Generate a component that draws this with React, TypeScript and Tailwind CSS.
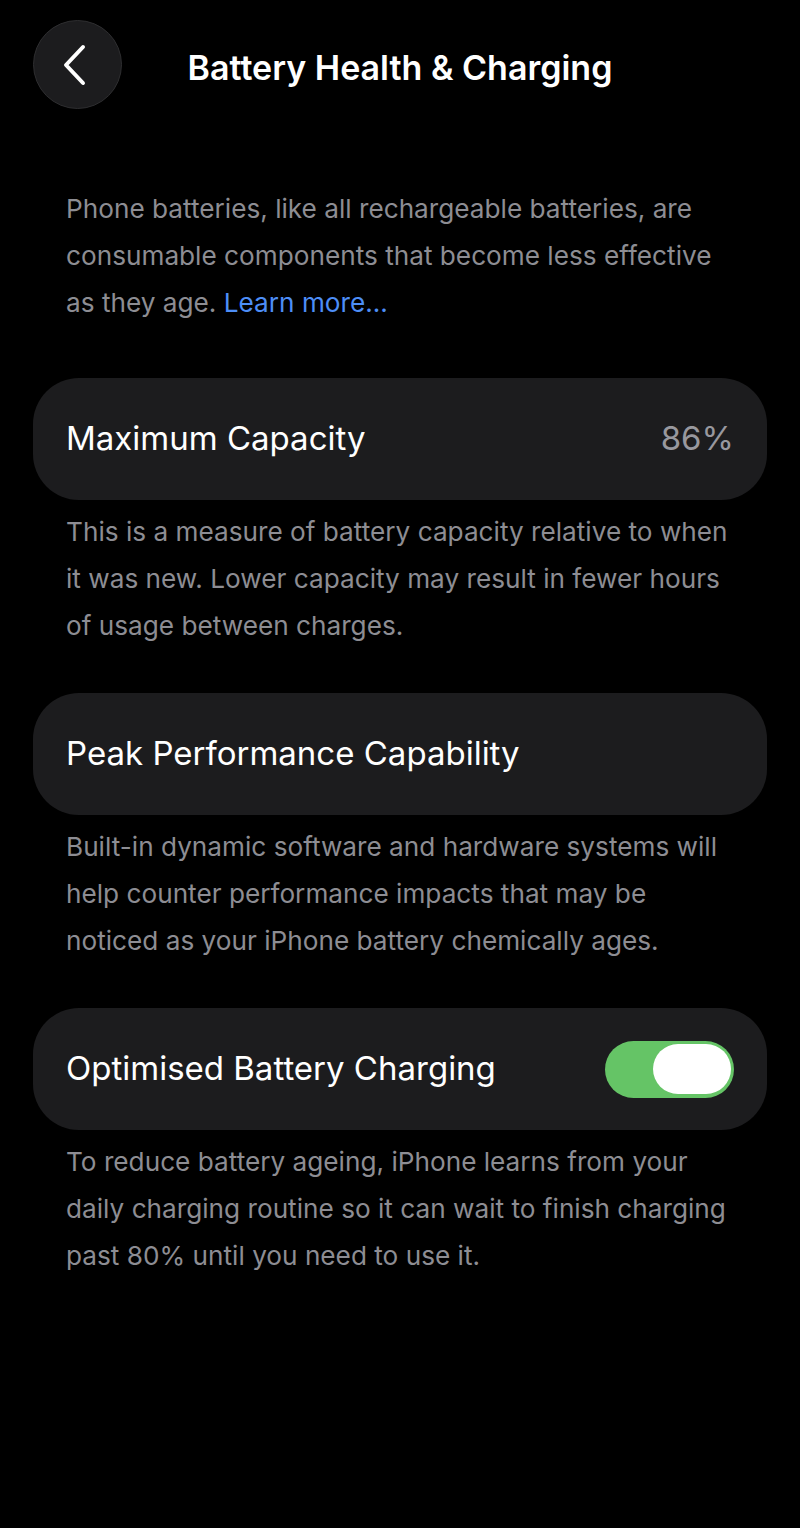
const FONT = { fontFamily: "Inter, 'Noto Sans', sans-serif" };

function Note({ lines }: { lines: React.ReactNode[] }) {
  return (
    <p className="pl-[66px] text-[26.2px] leading-[47px] text-[#8d8d93] whitespace-nowrap">
      {lines.map((l, i) => (
        <span key={i} className="block">
          {l}
        </span>
      ))}
    </p>
  );
}

function Card({ children }: { children: React.ReactNode }) {
  return (
    <div className="mx-[33px] h-[122px] rounded-[46px] bg-[#1c1c1e] px-[33px] flex items-center justify-between">
      {children}
    </div>
  );
}

export default function App() {
  return (
    <div className="w-[800px] h-[1528px] bg-black text-white" style={FONT}>
      {/* Header */}
      <div className="relative h-[130px] flex items-center justify-center">
        <button className="absolute left-[33px] top-[20px] w-[89px] h-[89px] rounded-full bg-[#1c1c1e] border border-[#2e2e30] flex items-center justify-center">
          <svg width="26" height="42" viewBox="0 0 26 42" className="-ml-[6px]">
            <polyline
              points="21,3 4,21 21,39"
              fill="none"
              stroke="white"
              strokeWidth="4"
              strokeLinecap="round"
              strokeLinejoin="round"
            />
          </svg>
        </button>
        <h1 className="mt-[4px] text-[34px] font-semibold">Battery Health &amp; Charging</h1>
      </div>

      <div className="pt-[55px]">
        <Note
          lines={[
            "Phone batteries, like all rechargeable batteries, are",
            "consumable components that become less effective",
            <>
              as they age. <span className="text-[#4d8ef7]">Learn more...</span>
            </>,
          ]}
        />
      </div>

      <div className="mt-[52px]">
        <Card>
          <span className="text-[33px]">Maximum Capacity</span>
          <span className="text-[33px] text-[#98989e]">86%</span>
        </Card>
      </div>
      <div className="mt-[8px]">
        <Note
          lines={[
            "This is a measure of battery capacity relative to when",
            "it was new. Lower capacity may result in fewer hours",
            "of usage between charges.",
          ]}
        />
      </div>

      <div className="mt-[44px]">
        <Card>
          <span className="text-[33px]">Peak Performance Capability</span>
        </Card>
      </div>
      <div className="mt-[8px]">
        <Note
          lines={[
            "Built-in dynamic software and hardware systems will",
            "help counter performance impacts that may be",
            "noticed as your iPhone battery chemically ages.",
          ]}
        />
      </div>

      <div className="mt-[44px]">
        <Card>
          <span className="text-[33px]">Optimised Battery Charging</span>
          <div className="w-[129px] h-[57px] rounded-full bg-[#65c466] flex items-center justify-end pr-[3px]">
            <div className="w-[78px] h-[50px] rounded-full bg-white" />
          </div>
        </Card>
      </div>
      <div className="mt-[8px]">
        <Note
          lines={[
            "To reduce battery ageing, iPhone learns from your",
            "daily charging routine so it can wait to finish charging",
            "past 80% until you need to use it.",
          ]}
        />
      </div>
    </div>
  );
}
